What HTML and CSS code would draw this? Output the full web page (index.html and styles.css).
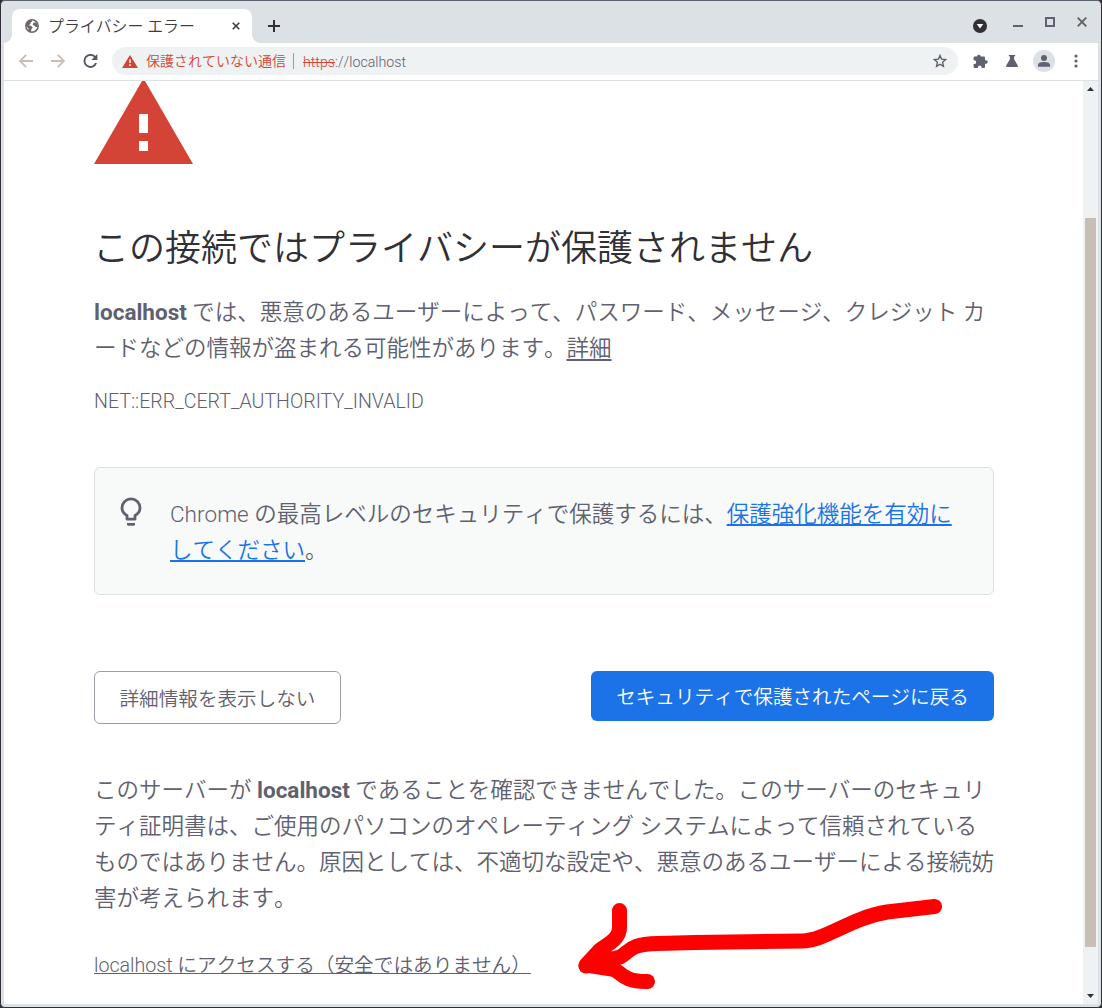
FILE: index.html
```html
<!DOCTYPE html>
<html lang="ja">
<head>
<meta charset="utf-8">
<title>プライバシー エラー</title>
<link rel="stylesheet" href="styles.css">
</head>
<body>
<div class="window">
  <header class="tabstrip">
    <div class="tab">
      <svg class="globe" width="14" height="14" viewBox="0 0 14 14"><circle cx="7" cy="7" r="6.2" fill="#fff" stroke="#6b6568" stroke-width="1.5"/><path d="M1 5 4 1.8 7 1 6.8 2.7 5.4 3.8 5.6 5 3.4 6.2 6 6.8 7.8 8.6 6.4 10 6 13 3.6 12 3.4 9.4 1 7zM8.6 3.6 11.4 3.6 13 7.4 10.8 8.2 9.4 6.4 7.6 6z" fill="#6b6568"/></svg>
      <span class="tab-title">プライバシー エラー</span>
      <svg class="tab-close" width="8" height="8" viewBox="0 0 8 8"><path d="M.7.7l6.6 6.6M7.3.7L.7 7.3" stroke="#3c3c43" stroke-width="1.6"/></svg>
    </div>
    <svg class="new-tab" width="12" height="12" viewBox="0 0 12 12"><path d="M6 0v12M0 6h12" stroke="#303036" stroke-width="2"/></svg>
    <div class="window-controls">
      <svg width="14" height="14" viewBox="0 0 14 14"><circle cx="7" cy="7" r="7" fill="#303036"/><path d="M3.7 5h6.6L7 9.5z" fill="#fff"/></svg>
      <svg width="10" height="14" viewBox="0 0 10 14"><path d="M0 7h10" stroke="#5f6170" stroke-width="2"/></svg>
      <svg class="raised" width="10" height="10" viewBox="0 0 10 10"><path d="M1 1h8v8H1z" fill="none" stroke="#5f6170" stroke-width="2"/></svg>
      <svg class="raised" width="10" height="10" viewBox="0 0 10 10"><path d="M.7.7l8.6 8.6M9.3.7L.7 9.3" stroke="#66605f" stroke-width="1.9"/></svg>
    </div>
  </header>
  <div class="toolbar">
    <svg class="back" width="14" height="14" viewBox="0 0 14 14"><path d="M14 7H1.2M7.2.8 1 7l6.2 6.2" fill="none" stroke="#c8beb6" stroke-width="1.8"/></svg>
    <svg class="forward" width="14" height="14" viewBox="0 0 14 14"><path d="M0 7h12.8M6.8.8 13 7l-6.2 6.2" fill="none" stroke="#c8beb6" stroke-width="1.8"/></svg>
    <svg class="reload" width="15" height="14" viewBox="0 0 15 14"><path d="M12.2 3.2A6 6 0 1 0 13.1 9" fill="none" stroke="#56555f" stroke-width="1.9"/><path d="M14.4 0v6H8.4z" fill="#56555f"/></svg>
    <div class="omnibox">
      <svg width="16" height="13" viewBox="0 0 16 13"><path d="M8 0l8 13H0z" fill="#d44436"/><path d="M7.2 4.6h1.6v3.4H7.2zM7.2 9.3h1.6v1.6H7.2z" fill="#fff"/></svg>
      <span class="warning">保護されていない通信</span>
      <span class="divider"></span>
      <span class="url"><s>https</s>://localhost</span>
      <svg class="star" width="14" height="14" viewBox="0 0 14 14"><path d="M7 1.4l1.6 3.8 4.1.4-3.1 2.7.9 4.1L7 10.3l-3.5 2.1.9-4.1-3.1-2.7 4.1-.4z" fill="none" stroke="#5a5962" stroke-width="1.3"/></svg>
    </div>
    <svg class="puzzle" width="15" height="14" viewBox="0 0 15 14"><path d="M4 2.6A1.9 1.9 0 0 1 7.8 2.6H11Q12 2.6 12 3.6V6.2H13A1.8 1.8 0 0 1 13 9.8H12V13Q12 14 11 14H8.6V13.4A1.8 1.8 0 0 0 5 13.4V14H1.6Q.6 14 .6 13V10H1.3A1.8 1.8 0 0 0 1.3 6.3H.6V3.6Q.6 2.6 1.6 2.6z" fill="#5f6170"/></svg>
    <svg class="flask" width="12" height="12" viewBox="0 0 12 12"><path d="M2.8 0h6.4v1.3H8.1v3l3.7 6.2q.5 1.5-1 1.5H1.2q-1.5 0-1-1.5l3.7-6.2v-3H2.8z" fill="#5f6170"/></svg>
    <svg class="avatar" width="22" height="22" viewBox="0 0 22 22"><circle cx="11" cy="11" r="11" fill="#dce1e6"/><circle cx="11" cy="8" r="3" fill="#5f6170"/><path d="M5 16.8V15q0-3 6-3t6 3v1.8z" fill="#5f6170"/></svg>
    <svg class="menu" width="4" height="14" viewBox="0 0 4 14"><g fill="#5f6170"><circle cx="2" cy="2" r="1.6"/><circle cx="2" cy="7" r="1.6"/><circle cx="2" cy="12" r="1.6"/></g></svg>
  </div>
  <div class="viewport">
    <main class="page">
      <svg class="danger" width="99" height="83" viewBox="0 0 99 83"><path d="M48 0h3l48 83H0z" fill="#d44436"/><path d="M45 33h9v19h-9zM45 60h9v10h-9z" fill="#fff"/></svg>
      <h1>この接続ではプライバシーが保護されません</h1>
      <p class="lead"><strong>localhost</strong> では、悪意のあるユーザーによって、パスワード、メッセージ、クレジット カ<br>ードなどの情報が盗まれる可能性があります。<a href="#">詳細</a></p>
      <div class="code">NET::ERR_CERT_AUTHORITY_INVALID</div>
      <section class="suggestion">
        <svg width="22" height="29" viewBox="0 0 22 29"><path d="M7 22.2V18.5Q2 15.8 2 10.8A9 9 0 0 1 20 10.8Q20 15.8 15 18.5V22.2z" fill="none" stroke="#5f6170" stroke-width="2.8" stroke-linejoin="round"/><path d="M7 26h8v1.2q0 1.6-1.5 1.6h-5Q7 28.8 7 27.2z" fill="#5f6170"/></svg>
        <p>Chrome の最高レベルのセキュリティで保護するには、<a href="#">保護強化機能を有効に<br>してください</a>。</p>
      </section>
      <div class="actions">
        <button class="secondary">詳細情報を表示しない</button>
        <button class="primary">セキュリティで保護されたページに戻る</button>
      </div>
      <p class="details">このサーバーが <strong>localhost</strong> であることを確認できませんでした。このサーバーのセキュリ<br>ティ証明書は、ご使用のパソコンのオペレーティング システムによって信頼されている<br>ものではありません。原因としては、不適切な設定や、悪意のあるユーザーによる接続妨<br>害が考えられます。</p>
      <a class="proceed" href="#">localhost にアクセスする（安全ではありません）</a>
    </main>
    <div class="scrollbar">
      <svg width="7" height="4" viewBox="0 0 7 4"><path d="M3.5 0L7 4H0z" fill="#303036"/></svg>
      <div class="thumb"></div>
      <svg class="down" width="7" height="4" viewBox="0 0 7 4"><path d="M0 0h7L3.5 4z" fill="#303036"/></svg>
    </div>
  </div>
</div>
<svg class="arrow" width="370" height="96" viewBox="572 898 370 96"><g fill="none" stroke="#f00" stroke-width="15" stroke-linecap="round" stroke-linejoin="round"><path d="M934.500 906.500L887 912C850 918 825 941 802 941L695 942.500L658 943.500C628 944 630 952 620 957L586 966"/><path d="M619.500 910.500V927C620 941 603 946 598 952L586 965L612 969C622 971 621 982 647.500 981.500"/></g><path d="M586 960L609 949 617 957 619 965 612 974 586 970z" fill="#f00"/></svg>
</body>
</html>
```
FILE: styles.css
```css
* { box-sizing: border-box; }
body {
  margin: 0;
  background: #303036;
  font-family: Roboto, "Noto Sans CJK JP", sans-serif;
  font-weight: 350;
  font-kerning: none;
  color: #5f6170;
}
svg { display: block; flex: none; }
.window {
  width: 1102px;
  height: 1008px;
  border: 1px solid #303036;
  border-top-color: #5f6170;
  border-radius: 5px;
  background: #dce1e6;
  padding: 0 3px 3px;
  display: flex;
  flex-direction: column;
  overflow: hidden;
}
.tabstrip {
  height: 42px;
  flex: none;
  display: flex;
  align-items: center;
  padding: 8px 11px 0 8px;
}
.tab {
  position: relative;
  width: 240px;
  height: 34px;
  background: #fff;
  border-radius: 8px 8px 0 0;
  display: flex;
  align-items: center;
  padding: 0 12px 0 13px;
}
.tab::before, .tab::after {
  content: "";
  position: absolute;
  bottom: 0;
  width: 8px;
  height: 8px;
}
.tab::before { left: -8px; background: radial-gradient(circle at 0 0, transparent 7.5px, #fff 8px); }
.tab::after { right: -8px; background: radial-gradient(circle at 100% 0, transparent 7.5px, #fff 8px); }
.tab-title {
  margin-left: 9px;
  padding-top: 2px;
  font-size: 15.9px;
  line-height: 20px;
  color: #3c3c43;
  white-space: nowrap;
}
.tab-close { margin-left: auto; }
.new-tab { margin-left: 16px; }
.window-controls {
  margin-left: auto;
  display: flex;
  align-items: center;
  gap: 22px;
}
.window-controls svg:first-child { margin-right: 4px; }
.raised { margin-top: -8px; }
.toolbar {
  height: 38px;
  flex: none;
  display: flex;
  align-items: center;
  padding: 0 20px 1px 15px;
  background: #fff;
  border-bottom: 1px solid #dce1e6;
}
.forward { margin-left: 18px; }
.reload { margin-left: 18px; }
.omnibox {
  width: 846px;
  height: 28px;
  margin-left: 14px;
  border-radius: 14px;
  background: #eef2f3;
  display: flex;
  align-items: center;
  padding: 0 11px 0 10px;
  font-size: 14px;
  line-height: 20px;
  white-space: nowrap;
}
.warning { margin-left: 8px; color: #d44436; }
.divider { width: 1px; height: 16px; margin: 0 9px 0 7px; background: #9a9da5; }
.url { font-size: 14.2px; padding-top: 1px; }
.url s { color: #d44436; }
.star { margin-left: auto; }
.puzzle { margin-left: 15px; }
.flask { margin-left: 18px; }
.avatar { margin-left: 15px; }
.menu { margin-left: auto; }
.viewport {
  flex: 1;
  min-height: 0;
  display: flex;
  background: #fff;
}
.page {
  flex: 1;
  padding-left: 90px;
  font-size: 22.5px;
  line-height: 36px;
  white-space: nowrap;
  overflow: hidden;
}
h1, p { margin: 0; }
h1 {
  margin-top: 64px;
  margin-left: -1px;
  font-size: 36px;
  line-height: 42px;
  font-weight: 350;
  color: #303036;
}
strong { font-weight: 700; }
a { color: inherit; text-underline-offset: 3px; }
.lead { margin-top: 24px; }
.code {
  margin-top: 18px;
  font-size: 19.6px;
  line-height: 36px;
  font-weight: 300;
  font-kerning: normal;
}
.suggestion {
  width: 900px;
  height: 128px;
  margin-top: 47px;
  border: 1px solid #dce1e6;
  border-radius: 6px;
  background: #f8faf9;
  display: flex;
  align-items: flex-start;
  gap: 28px;
  padding: 29px 25px;
}
.suggestion p { margin-top: -1px; }
.suggestion a { color: #1c73e8; text-decoration-thickness: 2px; text-underline-offset: 2px; }
.actions {
  width: 900px;
  margin-top: 76px;
  display: flex;
  justify-content: space-between;
  align-items: flex-start;
}
button {
  font: inherit;
  font-size: 19.6px;
  line-height: 30px;
  border-radius: 6px;
  padding: 4px 0 0;
  white-space: nowrap;
}
.secondary {
  width: 247px;
  height: 53px;
  border: 1px solid #9a9da5;
  background: #fff;
  color: inherit;
}
.primary {
  width: 403px;
  height: 50px;
  border: 0;
  background: #1c73e8;
  color: #fff;
}
.details { margin-top: 48px; }
.proceed {
  display: block;
  margin-top: 32px;
  font-size: 19.65px;
  text-underline-offset: 1px;
}
.scrollbar {
  width: 15px;
  flex: none;
  background: #eef2f3;
  display: flex;
  flex-direction: column;
  align-items: center;
  padding: 6px 0;
}
.thumb {
  width: 11px;
  height: 729px;
  margin-top: 127px;
  background: #c8beb6;
}
.down { margin-top: auto; }
.arrow { position: absolute; left: 572px; top: 898px; }
```
